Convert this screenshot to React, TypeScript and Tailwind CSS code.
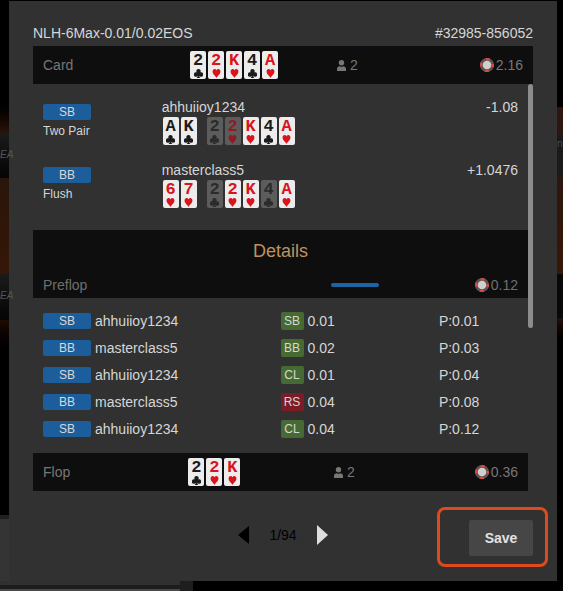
import clsx from "clsx";

type Suit = "club" | "heart";

interface CardData {
  rank: string;
  suit: Suit;
  dim?: boolean;
}

interface Player {
  seat: string;
  hand: string;
  name: string;
  result: string;
  hole: CardData[];
  board: CardData[];
}

interface Action {
  seat: string;
  name: string;
  type: string;
  amount: string;
  pot: string;
}

const board: CardData[] = [
  { rank: "2", suit: "club" },
  { rank: "2", suit: "heart" },
  { rank: "K", suit: "heart" },
  { rank: "4", suit: "club" },
  { rank: "A", suit: "heart" },
];

const players: Player[] = [
  {
    seat: "SB",
    hand: "Two Pair",
    name: "ahhuiioy1234",
    result: "-1.08",
    hole: [
      { rank: "A", suit: "club" },
      { rank: "K", suit: "club" },
    ],
    board: board.map((card, i) => ({ ...card, dim: i < 2 })),
  },
  {
    seat: "BB",
    hand: "Flush",
    name: "masterclass5",
    result: "+1.0476",
    hole: [
      { rank: "6", suit: "heart" },
      { rank: "7", suit: "heart" },
    ],
    board: board.map((card) => ({ ...card, dim: card.suit === "club" })),
  },
];

const actions: Action[] = [
  { seat: "SB", name: "ahhuiioy1234", type: "SB", amount: "0.01", pot: "P:0.01" },
  { seat: "BB", name: "masterclass5", type: "BB", amount: "0.02", pot: "P:0.03" },
  { seat: "SB", name: "ahhuiioy1234", type: "CL", amount: "0.01", pot: "P:0.04" },
  { seat: "BB", name: "masterclass5", type: "RS", amount: "0.04", pot: "P:0.08" },
  { seat: "SB", name: "ahhuiioy1234", type: "CL", amount: "0.04", pot: "P:0.12" },
];

function SuitIcon({ suit }: { suit: Suit }) {
  return (
    <svg
      viewBox="0 0 16 16"
      preserveAspectRatio="none"
      className="h-[9px] w-[9px]"
      fill="currentColor"
      aria-hidden="true"
    >
      {suit === "heart" ? (
        <path d="M8 16C6.500 12.500 1 9.500 1 4.500C1 2 2.600 0 4.700 0C6.300 0 7.400 1 8 2.600C8.600 1 9.700 0 11.300 0C13.400 0 15 2 15 4.500C15 9.500 9.500 12.500 8 16Z" />
      ) : (
        <path d="M8 0a3.800 3.800 0 0 1 3.200 5.900A4 4 0 1 1 9.200 12C9.400 13.800 10 15 11.500 16h-7C6 15 6.600 13.800 6.800 12A4 4 0 1 1 4.800 5.900A3.800 3.800 0 0 1 8 0Z" />
      )}
    </svg>
  );
}

function PlayingCard({ rank, suit, dim }: CardData) {
  const isRed = suit === "heart";

  return (
    <span
      className={clsx(
        "flex h-7 w-4 flex-col items-center rounded-xs",
        dim ? "bg-[#5c5c5c]" : "bg-[#ececec]",
        isRed && (dim ? "text-[#8e1c26]" : "text-[#d8141c]"),
        !isRed && (dim ? "text-[#2b2b2b]" : "text-[#1c1a1a]")
      )}
    >
      <span className="h-[18px] text-[17px] leading-5 font-bold font-['Liberation_Mono',monospace]">
        {rank}
      </span>
      <SuitIcon suit={suit} />
    </span>
  );
}

function Cards({ cards }: { cards: CardData[] }) {
  return (
    <div className="flex gap-0.5">
      {cards.map((card, i) => (
        <PlayingCard key={i} {...card} />
      ))}
    </div>
  );
}

function ChipIcon() {
  return (
    <svg viewBox="0 0 14 14" className="h-3.5 w-3.5" aria-hidden="true">
      <circle cx="7" cy="7" r="7" fill="#5e5352" />
      <circle
        cx="7"
        cy="7"
        r="6"
        fill="none"
        stroke="#e0473f"
        strokeWidth="2"
        strokeDasharray="4.200 5.225"
        strokeDashoffset="2.100"
      />
      <circle cx="7" cy="7" r="4.300" fill="#cfcfcf" />
    </svg>
  );
}

function UserIcon() {
  return (
    <svg viewBox="0 0 9 11" className="h-[11px] w-[9px]" fill="currentColor" aria-hidden="true">
      <circle cx="4.500" cy="2.700" r="2.700" />
      <path d="M0 11V9C0 7.200 1.300 6.300 2.800 6.200Q4.500 7.400 6.200 6.200C7.700 6.300 9 7.200 9 9V11Z" />
    </svg>
  );
}

function Pot({ amount }: { amount: string }) {
  return (
    <div className="flex items-center justify-end gap-0.5 pr-2.5">
      <ChipIcon />
      <span>{amount}</span>
    </div>
  );
}

interface StreetBarProps {
  label: string;
  cards: CardData[];
  count: string;
  pot: string;
}

function StreetBar({ label, cards, count, pot }: StreetBarProps) {
  return (
    <div className="grid h-[38px] grid-cols-[31.4%_29.4%_1fr] items-center bg-[#0e0e0e] text-[#777]">
      <span className="pl-2.5">{label}</span>
      <Cards cards={cards} />
      <div className="flex items-center justify-between">
        <div className="flex items-center gap-1">
          <UserIcon />
          <span>{count}</span>
        </div>
        <Pot amount={pot} />
      </div>
    </div>
  );
}

function SeatBadge({ seat }: { seat: string }) {
  return (
    <span className="block h-4 w-12 rounded-xs bg-[#1b5e9b] text-center text-xs leading-4 text-[#d8d8d8]">
      {seat}
    </span>
  );
}

function PlayerRow({ player }: { player: Player }) {
  return (
    <div className="grid h-[63px] grid-cols-[26%_1fr_auto] pt-[13px]">
      <div className="pt-[7px] pl-2.5">
        <SeatBadge seat={player.seat} />
        <div className="pt-0.5 text-xs leading-[18px]">{player.hand}</div>
      </div>
      <div>
        <div>{player.name}</div>
        <div className="flex gap-2.5 pl-px">
          <Cards cards={player.hole} />
          <Cards cards={player.board} />
        </div>
      </div>
      <div className="pr-2.5">{player.result}</div>
    </div>
  );
}

function ActionTable() {
  return (
    <table className="mt-[9px] mb-[11px] w-full table-fixed">
      <tbody>
        {actions.map((action, i) => (
          <tr key={i} className="h-[27px]">
            <td className="w-1/2 p-0">
              <div className="flex items-center gap-1 pl-2.5">
                <SeatBadge seat={action.seat} />
                <span>{action.name}</span>
              </div>
            </td>
            <td className="w-[32%] p-0">
              <div className="flex items-center gap-1">
                <span
                  className={clsx(
                    "h-[18px] w-[23px] rounded-xs text-center text-xs leading-[18px]",
                    action.type === "RS" ? "bg-[#7c1d26]" : "bg-[#456b32]"
                  )}
                >
                  {action.type}
                </span>
                <span>{action.amount}</span>
              </div>
            </td>
            <td className="w-[18%] p-0">{action.pot}</td>
          </tr>
        ))}
      </tbody>
    </table>
  );
}

function HandDialog() {
  return (
    <div role="dialog" aria-label="Hand history" className="mt-px bg-[#313131] px-6 pt-[22px] pb-[25px]">
      <div className="mb-[3px] flex justify-between">
        <span>NLH-6Max-0.01/0.02EOS</span>
        <span>#32985-856052</span>
      </div>
      <StreetBar label="Card" cards={board} count="2" pot="2.16" />

      <div className="flex">
        <div className="flex-1">
          <div className="pb-5">
            {players.map((player) => (
              <PlayerRow key={player.name} player={player} />
            ))}
          </div>

          {/* Details */}
          <div className="h-[68px] bg-[#0e0e0e] pt-2">
            <h2 className="text-center text-lg leading-[26px] text-[#bd935f]">Details</h2>
            <div className="grid grid-cols-[60.2%_1fr_auto] items-center pt-[11px] text-[#6e6e6e]">
              <span className="pl-2.5">Preflop</span>
              <span className="h-1 w-12 rounded-full bg-[#1d64a3]" />
              <Pot amount="0.12" />
            </div>
          </div>
          <ActionTable />
          <StreetBar label="Flop" cards={board.slice(0, 3)} count="2" pot="0.36" />
        </div>
        <div className="w-[5px]">
          <div className="h-[60%] rounded-full bg-[#8c8c8c]" />
        </div>
      </div>

      {/* Pager and save */}
      <div className="mt-[29px] grid grid-cols-[1fr_auto_1fr] items-start">
        <span />
        <div className="flex h-[30px] items-center gap-5 text-black">
          <button type="button" aria-label="Previous hand">
            <svg viewBox="0 0 11 20" className="h-5 w-[11px]" fill="#000">
              <path d="M11 1V19L0 10Z" />
            </svg>
          </button>
          <span>1/94</span>
          <button type="button" aria-label="Next hand">
            <svg viewBox="0 0 11 20" className="h-5 w-[11px]" fill="#dedede">
              <path d="M0 0V20L11 10Z" />
            </svg>
          </button>
        </div>
        <div className="relative justify-self-end">
          <button type="button" className="h-9 w-16 rounded-xs bg-[#464646] font-bold text-[#e2e2e2]">
            Save
          </button>
          <div className="pointer-events-none absolute -top-[13px] -right-[15px] -bottom-[11px] -left-8 rounded-lg border-3 border-[#df4a1c]" />
        </div>
      </div>
    </div>
  );
}

// Table seats that stay visible beside the dialog
function LeftEdge() {
  return (
    <div className="z-10 flex flex-col text-[10px] text-[#555] italic" aria-hidden="true">
      <div className="h-[92px]" />
      <div className="h-[41px] bg-linear-to-b from-black to-[#29140b]" />
      <div className="h-[45px] bg-linear-to-b from-[#1b1b1b] to-[#050505] pt-3">EA</div>
      <div className="h-24 bg-linear-to-b from-[#2a150b] to-[#351706]" />
      <div className="h-[46px] bg-linear-to-b from-[#1b1b1b] to-[#050505] pt-3">EA</div>
      <div className="h-10 bg-linear-to-b from-[#1d0c04] to-black" />
      <div className="flex-1" />
      <div className="h-[66px] border-t-4 border-[#202020] bg-[#343434]" />
    </div>
  );
}

function RightEdge() {
  return (
    <div className="flex flex-col text-[10px] text-[#4a4a4a]" aria-hidden="true">
      <div className="h-[107px]" />
      <div className="h-[27px] bg-[#2c160d]" />
      <div className="h-[43px] bg-[#1a1a1a]">n</div>
      <div className="h-[97px] bg-linear-to-b from-[#2c160d] to-[#351706]" />
      <div className="h-11 bg-[#080808]" />
      <div className="h-8 bg-linear-to-b from-[#241008] to-black" />
    </div>
  );
}

export default function App() {
  return (
    <div className="flex min-h-screen flex-col bg-black font-['Liberation_Sans',Arial,sans-serif] text-[14px] leading-5 text-[#d6d6d6]">
      <div className="grid grid-cols-[9px_1fr_6px]">
        <LeftEdge />
        <HandDialog />
        <RightEdge />
      </div>
      <div className="flex h-2.5" aria-hidden="true">
        <div className="w-[32%] border-t-4 border-b-2 border-t-[#303030] border-b-[#484848] bg-[#1c1c1c]" />
        <div className="w-[13px] bg-[#1e1e1e]" />
      </div>
    </div>
  );
}
